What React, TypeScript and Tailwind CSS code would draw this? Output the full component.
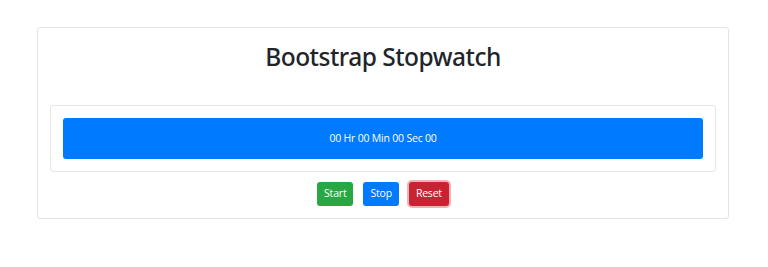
import React from "react";

export default function App() {
  return (
    <div className="w-[768px] h-[267px] bg-white pt-[27px]" style={{ fontFamily: '"Open Sans", "Noto Sans", sans-serif' }}>
      <div className="ml-[37px] w-[692px] border border-[#e3e3e3] rounded-[3px] px-[12px] pb-[12px] pt-[11px]">
        <h1 className="text-center text-[24.5px] leading-[36px] text-[#212529] tracking-[-0.5px] h-[66px]" style={{ fontFamily: '"Noto Sans", "Open Sans", sans-serif', fontWeight: 500 }}>Bootstrap Stopwatch</h1>
        <div className="border border-[#e6e6e6] rounded-[3px] p-[12px]">
          <div className="h-[41px] bg-[#007bff] rounded-[3px] flex items-center justify-center text-white text-[10.5px] tracking-[-0.2px]">
            00 Hr 00 Min 00 Sec 00
          </div>
        </div>
        <div className="flex justify-center gap-[10px] mt-[10px]">
          <button className="h-[24px] px-[7px] bg-[#28a745] text-white text-[10.5px] tracking-[-0.2px] rounded-[3px]">Start</button>
          <button className="h-[24px] px-[7px] bg-[#007bff] text-white text-[10.5px] tracking-[-0.2px] rounded-[3px]">Stop</button>
          <button className="h-[24px] px-[7px] bg-[#c82333] text-white text-[10.5px] tracking-[-0.2px] rounded-[3px] shadow-[0_0_0_2px_rgba(225,83,97,0.45)]">Reset</button>
        </div>
      </div>
    </div>
  );
}
